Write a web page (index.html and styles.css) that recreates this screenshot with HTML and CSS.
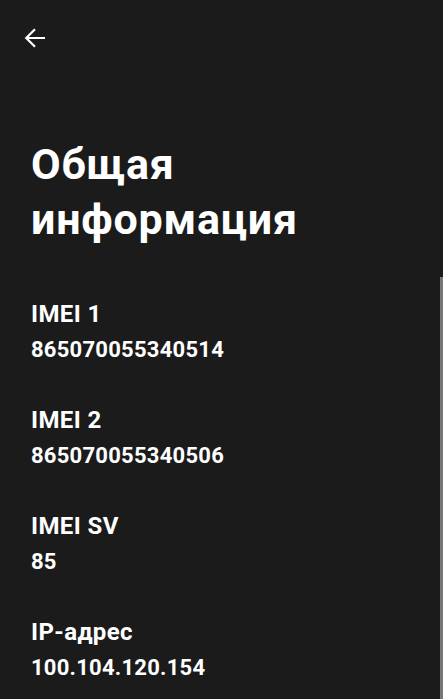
FILE: index.html
```html
<!DOCTYPE html>
<html lang="ru">
<head>
    <meta charset="UTF-8">
    <meta name="viewport" content="width=device-width, initial-scale=1.0">
    <title>Общая информация</title>
    <link rel="stylesheet" href="styles.css">
</head>
<body>
    <div class="toolbar">
        <svg class="back" viewBox="0 0 22 22" width="22" height="22">
            <path d="M21 11H2.5 M11 2.2L2.2 11l8.8 8.8" stroke="#fff" stroke-width="2.2" fill="none"/>
        </svg>
    </div>

    <div class="content">
        <h1 class="title">Общая информация</h1>

        <div class="info-list">
            <div class="info-item">
                <div class="info-label">IMEI 1</div>
                <div class="info-value">865070055340514</div>
            </div>
            <div class="info-item">
                <div class="info-label">IMEI 2</div>
                <div class="info-value">865070055340506</div>
            </div>
            <div class="info-item">
                <div class="info-label">IMEI SV</div>
                <div class="info-value">85</div>
            </div>
            <div class="info-item">
                <div class="info-label">IP-адрес</div>
                <div class="info-value">100.104.120.154</div>
            </div>
        </div>
    </div>

    <div class="scrollbar"></div>
</body>
</html>
```

FILE: styles.css
```css
html, body {
    margin: 0;
    padding: 0;
    height: 100%;
    overflow: hidden;
}
body {
    background: #1b1b1b;
    color: #fff;
    font-family: Roboto, "Noto Sans", sans-serif;
    position: relative;
}
.toolbar {
    height: 137px;
    padding: 27px 0 0 24px;
    box-sizing: border-box;
}
.back {
    display: block;
}
.content {
    padding: 0 31px;
}
.title {
    margin: 0;
    font-size: 43px;
    line-height: 55px;
    font-weight: 700;
    letter-spacing: 0.8px;
    width: 320px;
}
.info-list {
    display: flex;
    flex-direction: column;
    gap: 36px;
    margin-top: 50px;
}
.info-label {
    font-size: 24px;
    line-height: 35px;
    font-weight: 700;
    letter-spacing: 0.4px;
}
.info-value {
    font-size: 22px;
    line-height: 35px;
    font-weight: 700;
    letter-spacing: 0.25px;
}
.scrollbar {
    position: absolute;
    top: 277px;
    right: 0;
    width: 3px;
    bottom: 0;
    background: #777;
}
```
